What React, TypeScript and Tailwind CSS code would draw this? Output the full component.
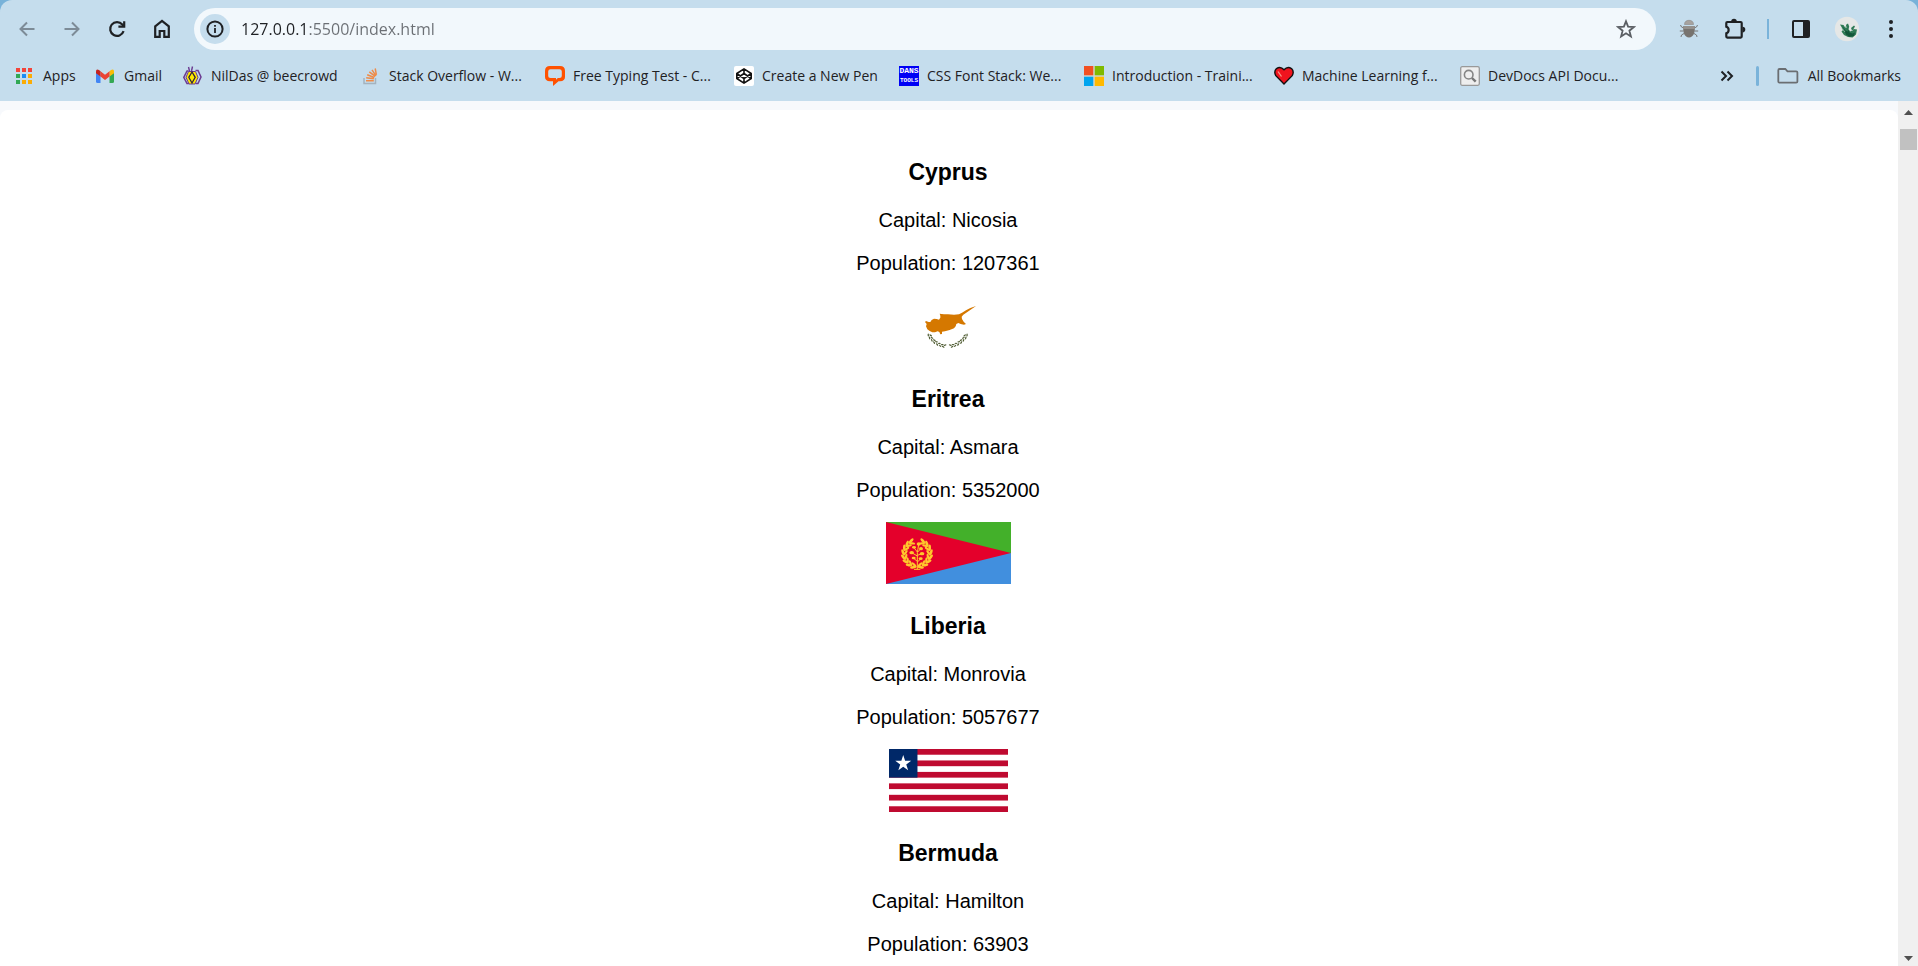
import type { ReactNode } from "react";

/* ---------- toolbar icons ---------- */

function BackIcon() {
  return (
    <svg width="18" height="18" viewBox="0 0 18 18" fill="none" stroke="#7d8b97" strokeWidth="2" aria-hidden="true">
      <path d="M16.5 9H3M9 2.5 2.5 9 9 15.5" />
    </svg>
  );
}

function ForwardIcon() {
  return (
    <svg width="18" height="18" viewBox="0 0 18 18" fill="none" stroke="#7d8b97" strokeWidth="2" aria-hidden="true">
      <path d="M1.5 9H15M9 2.5 15.500 9 9 15.5" />
    </svg>
  );
}

function ReloadIcon() {
  return (
    <svg width="18" height="18" viewBox="0 0 18 18" fill="none" stroke="#1f2124" strokeWidth="2.2" aria-hidden="true">
      <path d="M15.6 11.200A6.900 6.900 0 1 1 14.300 4.500L15.600 6" />
      <path d="M16.200 1.300V6.700H10.400" />
    </svg>
  );
}

function HomeIcon() {
  return (
    <svg width="18" height="20" viewBox="0 0 18 20" fill="none" stroke="#1f2124" strokeWidth="2.2" aria-hidden="true">
      <path d="M2.200 7.300 9 2l6.800 5.300V17.800H11.300V12H6.700v5.800H2.200z" />
    </svg>
  );
}

function InfoIcon() {
  return (
    <svg width="18" height="18" viewBox="0 0 18 18" aria-hidden="true">
      <circle cx="9" cy="9" r="7.600" fill="none" stroke="#1f2124" strokeWidth="2" />
      <path d="M8.100 8h1.800v5H8.100zM8.100 5h1.800v1.800H8.100z" fill="#1f2124" />
    </svg>
  );
}

function StarIcon() {
  return (
    <svg width="20" height="20" viewBox="0 0 20 20" fill="none" stroke="#5b5f64" strokeWidth="1.8" aria-hidden="true">
      <path d="m10 2.300 2.100 5.400 5.800.3-4.500 3.700 1.500 5.700L10 14.200l-4.900 3.200 1.500-5.700L2.100 8l5.800-.3z" />
    </svg>
  );
}

function BugIcon() {
  return (
    <svg width="20" height="20" viewBox="0 0 20 20" aria-hidden="true">
      <path
        d="M5 9 2.500 8 1.500 6M4.500 12H.8M5 14.500 2.500 16l-.5 2M15 9l2.500-1 1-2M15.500 12h3.700M15 14.500l2.500 1.500.5 2"
        fill="none"
        stroke="#777"
        strokeWidth="1"
      />
      <path d="M5.500 5.500C5.500 2.500 7.500 1.300 10 1.300s4.500 1.200 4.500 4.200z" fill="#a6a29f" stroke="#8b8784" strokeWidth=".6" />
      <path d="M4.300 7h11.400c.7 6.500-1.400 11.500-5.700 11.500S3.600 13.500 4.300 7z" fill="#77736f" />
      <path d="M4.300 7h11.400l.1 3H4.200z" fill="#94908c" />
    </svg>
  );
}

function PuzzleIcon() {
  return (
    <svg width="22" height="22" viewBox="0 0 22 22" aria-hidden="true">
      <path
        d="M3.300 4h13.400q1 0 1 1v13.600q0 1-1 1H3.300q-1 0-1-1v-3.400a3.500 3.500 0 0 0 0-6.600V5q0-1 1-1z"
        fill="none"
        stroke="#1f2124"
        strokeWidth="2.200"
      />
      <path d="M7.200 3.500a2.800 2.800 0 0 1 5.600 0zM18.500 8.800a2.800 2.800 0 0 1 0 5.600z" fill="#1f2124" />
    </svg>
  );
}

function SidePanelIcon() {
  return (
    <svg width="18" height="20" viewBox="0 0 18 20" aria-hidden="true">
      <rect x="1" y="2" width="16" height="16" rx="1" fill="none" stroke="#1f2124" strokeWidth="2" />
      <path d="M11 2h6v16h-6z" fill="#1f2124" />
    </svg>
  );
}

function ProfileIcon() {
  return (
    <svg width="26" height="26" viewBox="0 0 26 26" aria-hidden="true">
      <circle cx="13" cy="13" r="12.200" fill="#e5e7e6" />
      <path d="m6 8.500 3.500.5L11.500 12l.8-3.500L14 7.500l1.200 3-.7 3 2 2 1.500-1-1-2.500 3-2.500 1 1-1.500 2.500 3.500.5-1 5-3.500 3-4.500-.5-4-2-2.500-3.500 1.500-1.500-1.500-3z" fill="#2f7a55" />
      <path d="m8.500 10 3 4.500 2.500 1-.5-3.500 2 4.500 3 1 2.500-1-1 3.500-4.500.8-3.500-2.300z" fill="#14573a" />
      <path d="m8 12.500 3 3.500M18 15l1.500-1.500M12 10l.6 2" stroke="#93b7a4" strokeWidth=".8" />
    </svg>
  );
}

function MenuDotsIcon() {
  return (
    <svg width="6" height="20" viewBox="0 0 6 20" fill="#1f2124" aria-hidden="true">
      <circle cx="3" cy="3" r="2" />
      <circle cx="3" cy="10" r="2" />
      <circle cx="3" cy="17" r="2" />
    </svg>
  );
}

function ChevronsIcon() {
  return (
    <svg width="14" height="12" viewBox="0 0 14 12" fill="none" stroke="#1f2124" strokeWidth="2" aria-hidden="true">
      <path d="m1.500 1.500 4.500 4.500-4.500 4.500M7.500 1.500 12 6l-4.500 4.500" />
    </svg>
  );
}

function FolderIcon() {
  return (
    <svg width="22" height="18" viewBox="0 0 22 18" fill="none" stroke="#6b6e72" strokeWidth="1.800" aria-hidden="true">
      <path d="M2.500 2h5.800l2.200 2.300h8.700q1.200 0 1.200 1.200v9q0 1.200-1.200 1.200H2.500q-1.200 0-1.200-1.200V3.200Q1.300 2 2.500 2z" />
    </svg>
  );
}

/* ---------- bookmark icons ---------- */

function AppsIcon() {
  return (
    <svg width="20" height="20" viewBox="0 0 20 20" aria-hidden="true">
      <path d="M1 2h4v4H1zM7 2h4v4H7zM13 2h4v4h-4z" fill="#f3443a" />
      <path d="M1 8h4v4H1zM1 14h4v4H1z" fill="#31a854" />
      <path d="M7 8h4v4H7z" fill="#1a8cf5" />
      <path d="M13 8h4v4h-4zM7 14h4v4H7zM13 14h4v4h-4z" fill="#fbac05" />
    </svg>
  );
}

function GmailIcon() {
  return (
    <svg width="20" height="20" viewBox="0 0 20 20" aria-hidden="true">
      <path d="M0 6.500 4.500 9.800V17H1.500Q0 17 0 15.500z" fill="#4285f4" />
      <path d="M13.500 9.800 18 6.500v9q0 1.500-1.500 1.500h-3z" fill="#34a853" />
      <path d="M13.500 5.300 15 4q3-1.500 3 1.500v1.700l-4.500 3.400z" fill="#fbbc04" />
      <path d="M4.500 5.300 9 8.700l4.500-3.400v5.300L9 14l-4.500-3.400z" fill="#ea4335" />
      <path d="M0 5.500Q0 2.500 3 4l1.500 1.300v5.300L0 7.200z" fill="#c5221f" />
    </svg>
  );
}

function BeecrowdIcon() {
  return (
    <svg width="20" height="20" viewBox="0 0 20 20" aria-hidden="true">
      <path d="M5.500 5H4L.8 11.300 4 17.500h2M12.500 4.500H15l3 6.500-3 6.500h-2.500" fill="none" stroke="#6b3a91" strokeWidth="1.500" />
      <path d="M5.500 5.500h7L15 11.300 12 18H6l-3-6.700z" fill="#ffeb00" stroke="#6b3a91" strokeWidth="1" />
      <path d="M9 6 5.800 11.300 9 17l3.200-5.700z" fill="#ffeb00" stroke="#33223e" strokeWidth="1.300" />
      <path d="M5.500 1 6.500 5M9.500.5 8.500 5" stroke="#6b3a91" strokeWidth="1.400" />
    </svg>
  );
}

function StackOverflowIcon() {
  return (
    <svg width="20" height="20" viewBox="0 0 20 20" fill="none" aria-hidden="true">
      <path d="M3 12v5.500h11.500V12" stroke="#a5b3be" strokeWidth="1.500" />
      <path d="M5 14.800h7.800M5.200 11.800l7.700 1M6.200 8.700l7.100 2.800M8.300 5.800l6 4.600M11 3.800l4 6M14.200 2.500l1.200 6.300" stroke="#ee8b48" strokeWidth="1.500" />
    </svg>
  );
}

function LiveChatIcon() {
  return (
    <svg width="20" height="20" viewBox="0 0 20 20" aria-hidden="true">
      <path
        d="M5 0h10q5 0 5 5v6q0 4-5 4.300h-1.500L8 20v-4.700H5Q0 15 0 11V5q0-5 5-5zM5.500 3.200Q3.200 3.200 3.200 5.500v4.500q0 2 2.300 2h5.500v1.800l1.800-1.800h1.700q2.300 0 2.300-2V5.500q0-2.300-2.300-2.300z"
        fill="#ff5100"
        fillRule="evenodd"
      />
    </svg>
  );
}

function CodePenIcon() {
  return (
    <svg width="20" height="20" viewBox="0 0 20 20" aria-hidden="true">
      <rect width="20" height="20" rx="2" fill="#fff" />
      <path d="m10 2.800 7.200 4.700v5L10 17.200l-7.200-4.700v-5zM2.800 7.500 10 12.500l7.200-5M2.800 12.500l7.200-5 7.200 5M10 2.800v4.700M10 12.500v4.700" fill="none" stroke="#111" strokeWidth="1.600" strokeLinejoin="round" />
    </svg>
  );
}

function DansToolsIcon() {
  return (
    <span className="flex h-5 w-5 flex-col items-center bg-[#0000f5] font-['Liberation_Mono',monospace] text-[8px] leading-[10px] font-bold text-white">
      <span>DANS</span>
      <span className="text-[6px]">TOOLS</span>
    </span>
  );
}

function MicrosoftIcon() {
  return (
    <svg width="20" height="20" viewBox="0 0 20 20" aria-hidden="true">
      <path d="M0 0h20v20H0z" fill="#d0d8d5" />
      <path d="M0 0h9.300v9.300H0z" fill="#f25022" />
      <path d="M10.700 0H20v9.300h-9.300z" fill="#7fba00" />
      <path d="M0 10.700h9.300V20H0z" fill="#00a4ef" />
      <path d="M10.700 10.700H20V20h-9.300z" fill="#ffb900" />
    </svg>
  );
}

function HeartIcon() {
  return (
    <svg width="20" height="20" viewBox="0 0 20 20" aria-hidden="true">
      <path d="M10 18 1.800 9.700Q-.5 5.500 2.500 2.600 6.500 0 10 3.800 13.500 0 17.500 2.600q3 2.900.7 7.100z" fill="#f0141e" stroke="#111" strokeWidth="1.400" />
      <path d="m4 5.500 3.500 5" stroke="#f79a8a" strokeWidth="1.300" />
    </svg>
  );
}

function DevDocsIcon() {
  return (
    <svg width="20" height="20" viewBox="0 0 20 20" fill="none" aria-hidden="true">
      <rect x=".7" y=".7" width="18.600" height="18.600" rx="1.500" fill="#eee" stroke="#999" strokeWidth="1.300" />
      <circle cx="8.700" cy="8.700" r="4.300" stroke="#858585" strokeWidth="1.600" />
      <path d="m12 12 3.700 3.700" stroke="#777" strokeWidth="2.400" />
    </svg>
  );
}

/* ---------- flags ---------- */

function CyprusFlag() {
  const leaves = [
    [271, 554, 60], [275, 562, 50], [282, 569, 45], [289, 575, 35], [298, 580, 25], [307, 584, 20], [316, 586, 10],
  ];
  return (
    <svg width="94" height="63" viewBox="186 432 282 189" role="img" aria-label="Flag of Cyprus">
      <path
        d="M411 465 394 471 381 478 369 485 360 490 345 491 327 490 315 490 302 488 304 494 304 500 300 506 293 504 285 503 278 507 274 513 269 513 261 510 258 513 263 519 261 526 265 535 272 540 280 544 288 544 296 541 301 543 304 550 309 549 309 542 318 541 332 537 345 532 350 526 352 519 358 516 365 519 375 521 381 519 374 512 369 504 368 497 373 491 384 484 397 475z"
        fill="#d57800"
      />
      <g fill="#4e5b31">
        {leaves.map(([x, y, a]) => (
          <g key={x}>
            <ellipse cx={x - 2} cy={y + 3} rx="4.500" ry="2" transform={`rotate(${a + 25} ${x} ${y})`} />
            <ellipse cx={x + 3} cy={y - 3} rx="4.500" ry="2" transform={`rotate(${a - 25} ${x} ${y})`} />
            <ellipse cx={654 - x} cy={y + 3} rx="4.500" ry="2" transform={`rotate(${-a - 25} ${652 - x} ${y})`} />
            <ellipse cx={649 - x} cy={y - 3} rx="4.500" ry="2" transform={`rotate(${25 - a} ${652 - x} ${y})`} />
          </g>
        ))}
      </g>
    </svg>
  );
}

function EritreaFlag() {
  const angles = [-65, -45, -25, -5, 15, 35, 55, 75];
  return (
    <svg width="125" height="62" viewBox="0 0 375 186" role="img" aria-label="Flag of Eritrea">
      <path d="M0 0h375v93H0z" fill="#43b02a" />
      <path d="M0 93h375v93H0z" fill="#418fde" />
      <path d="M0 0l375 93L0 186z" fill="#e4002b" />
      <g fill="#ffc72c">
        {angles.map((a) => (
          <g key={a}>
            <g transform={`rotate(${-a} 93 95)`}>
              <ellipse cx="51" cy="95" rx="4" ry="10" transform="rotate(-25 51 95)" />
              <ellipse cx="59" cy="95" rx="3.500" ry="9" transform="rotate(30 59 95)" />
            </g>
            <g transform={`rotate(${a} 93 95)`}>
              <ellipse cx="135" cy="95" rx="4" ry="10" transform="rotate(25 135 95)" />
              <ellipse cx="127" cy="95" rx="3.500" ry="9" transform="rotate(-30 127 95)" />
            </g>
          </g>
        ))}
        <ellipse cx="98" cy="66" rx="6" ry="5" />
        <ellipse cx="84" cy="76" rx="6" ry="4" />
        <ellipse cx="105" cy="80" rx="6" ry="5" />
        <ellipse cx="77" cy="92" rx="7" ry="5" />
        <ellipse cx="108" cy="95" rx="7" ry="5" />
        <ellipse cx="83" cy="108" rx="6" ry="4" />
        <ellipse cx="104" cy="110" rx="6" ry="4" />
      </g>
      <path d="M94 142V92l4-24M94 102 77 92M94 90 84 77M95 100l13-6M95 90l10-10M94 118l-11-9M94 120l10-9M84 142h19" fill="none" stroke="#ffc72c" strokeWidth="3" />
    </svg>
  );
}

function LiberiaFlag() {
  const redStripes = [0, 2, 4, 6, 8, 10];
  return (
    <svg width="119" height="63" viewBox="0 0 209 110" preserveAspectRatio="none" role="img" aria-label="Flag of Liberia">
      <path d="M0 0h209v110H0z" fill="#fff" />
      {redStripes.map((n) => (
        <rect key={n} y={n * 10} width="209" height="10" fill="#bf0a30" />
      ))}
      <path d="M0 0h50v50H0z" fill="#002868" />
      <path d="m25 10.500 3.300 10.200H39l-8.700 6.300 3.300 10.200-8.600-6.300-8.600 6.300L19.700 27 11 20.700h10.700z" fill="#fff" />
    </svg>
  );
}

function BermudaFlag() {
  return (
    <svg width="125" height="63" viewBox="0 0 125 63" role="img" aria-label="Flag of Bermuda">
      <path d="M0 0h125v63H0z" fill="#cf142b" />
      <path d="M0 0h62v31H0z" fill="#00247d" />
      <path d="m0 0 62 31M62 0 0 31M31 0v31M0 15.500h62" stroke="#fff" strokeWidth="6" />
      <path d="M31 0v31M0 15.500h62" stroke="#cf142b" strokeWidth="3" />
      <path d="M84 18h22v16q0 8-11 13-11-5-11-13z" fill="#fff" />
    </svg>
  );
}

/* ---------- page ---------- */

type Bookmark = { label: string; icon: ReactNode; width: string };

const bookmarks: Bookmark[] = [
  { label: "Apps", icon: <AppsIcon />, width: "w-[81px]" },
  { label: "Gmail", icon: <GmailIcon />, width: "w-[87px]" },
  { label: "NilDas @ beecrowd", icon: <BeecrowdIcon />, width: "w-[178px]" },
  { label: "Stack Overflow - W...", icon: <StackOverflowIcon />, width: "w-[184px]" },
  { label: "Free Typing Test - C...", icon: <LiveChatIcon />, width: "w-[189px]" },
  { label: "Create a New Pen", icon: <CodePenIcon />, width: "w-[165px]" },
  { label: "CSS Font Stack: We...", icon: <DansToolsIcon />, width: "w-[185px]" },
  { label: "Introduction - Traini...", icon: <MicrosoftIcon />, width: "w-[190px]" },
  { label: "Machine Learning f...", icon: <HeartIcon />, width: "w-[186px]" },
  { label: "DevDocs API Docu...", icon: <DevDocsIcon />, width: "w-[186px]" },
];

const countries = [
  { name: "Cyprus", capital: "Nicosia", population: 1207361, flag: <CyprusFlag /> },
  { name: "Eritrea", capital: "Asmara", population: 5352000, flag: <EritreaFlag /> },
  { name: "Liberia", capital: "Monrovia", population: 5057677, flag: <LiberiaFlag /> },
  { name: "Bermuda", capital: "Hamilton", population: 63903, flag: <BermudaFlag /> },
];

function IconButton({ label, children }: { label: string; children: ReactNode }) {
  return (
    <button type="button" aria-label={label} className="flex h-8 w-8 shrink-0 items-center justify-center">
      {children}
    </button>
  );
}

function Toolbar() {
  return (
    <div className="flex items-center px-[11px] pt-2">
      <nav className="flex gap-[13px]" aria-label="Navigation">
        <IconButton label="Back"><BackIcon /></IconButton>
        <IconButton label="Forward"><ForwardIcon /></IconButton>
        <IconButton label="Reload"><ReloadIcon /></IconButton>
        <IconButton label="Home"><HomeIcon /></IconButton>
      </nav>
      <div className="ml-4 flex h-[42px] grow items-center rounded-full bg-[#f2f8fc] pr-3.5 pl-1.5">
        <button type="button" aria-label="View site information" className="flex h-[30px] w-[30px] shrink-0 items-center justify-center rounded-full bg-[#c5dded]">
          <InfoIcon />
        </button>
        <div className="ml-[11px] grow text-[16px] leading-6">
          <input
            type="text"
            aria-label="Address"
            defaultValue="127.0.0.1:5500/index.html"
            className="w-full bg-linear-to-r from-[#1f2124] from-[67px] to-[#6b6f74] to-[67px] bg-clip-text text-transparent outline-none"
          />
        </div>
        <IconButton label="Bookmark this tab"><StarIcon /></IconButton>
      </div>
      <div className="ml-[17px] flex items-center">
        <IconButton label="Debugger extension"><BugIcon /></IconButton>
        <span className="ml-3.5"><IconButton label="Extensions"><PuzzleIcon /></IconButton></span>
        <span className="mx-4 h-5 w-0.5 bg-[#7ab3da]" />
        <IconButton label="Side panel"><SidePanelIcon /></IconButton>
        <span className="ml-3.5"><IconButton label="Profile"><ProfileIcon /></IconButton></span>
        <span className="ml-3"><IconButton label="Menu"><MenuDotsIcon /></IconButton></span>
      </div>
    </div>
  );
}

function BookmarksBar() {
  return (
    <div className="flex h-[51px] items-center pr-[17px] pl-[15px] text-[14px] leading-5">
      <nav className="flex grow overflow-hidden" aria-label="Bookmarks">
        {bookmarks.map((b) => (
          <a key={b.label} href="#" className={`flex shrink-0 items-center gap-2 whitespace-nowrap ${b.width}`}>
            <span className="shrink-0">{b.icon}</span>
            {b.label}
          </a>
        ))}
      </nav>
      <button type="button" aria-label="More bookmarks" className="px-2">
        <ChevronsIcon />
      </button>
      <span className="mx-3.5 h-5 w-[3px] rounded-sm bg-[#7ab3da]" />
      <a href="#" className="ml-1 flex items-center gap-[9px] whitespace-nowrap">
        <FolderIcon />
        All Bookmarks
      </a>
    </div>
  );
}

function Scrollbar() {
  return (
    <div className="flex w-5 shrink-0 flex-col items-center bg-[#f0f0f0]" aria-hidden="true">
      <svg width="9" height="5" viewBox="0 0 9 5" className="mt-[9px]" fill="#505050">
        <path d="M0 5 4.500 0 9 5z" />
      </svg>
      <div className="mt-3.5 h-[21px] w-[17px] bg-[#c1c1c1]" />
      <svg width="9" height="5" viewBox="0 0 9 5" className="mt-auto mb-[5px]" fill="#505050">
        <path d="M0 0h9L4.500 5z" />
      </svg>
    </div>
  );
}

export default function App() {
  return (
    <div className="flex h-screen flex-col bg-[#78b2d9]">
      <header className="shrink-0 rounded-t-xl bg-[#c5dded] font-['Open_Sans',sans-serif] text-[#1f2124]">
        <Toolbar />
        <BookmarksBar />
      </header>
      <div className="flex min-h-0 grow bg-[#f7f9fc]">
        <div className="flex min-w-0 grow pt-[9px]">
          <main className="grow overflow-hidden rounded-t-lg bg-white pt-[49px] pr-0.5 text-center font-['Liberation_Sans',sans-serif] text-[20px] leading-[23px] text-black">
            {countries.map((c) => (
              <article key={c.name} className="mb-[23px]">
                <h3 className="mb-6 text-[23px] leading-[26px] font-bold">{c.name}</h3>
                <p className="mb-5">Capital: {c.capital}</p>
                <p className="mb-5">Population: {c.population}</p>
                <div className="flex h-[68px] items-start justify-center">{c.flag}</div>
              </article>
            ))}
          </main>
        </div>
        <Scrollbar />
      </div>
    </div>
  );
}
